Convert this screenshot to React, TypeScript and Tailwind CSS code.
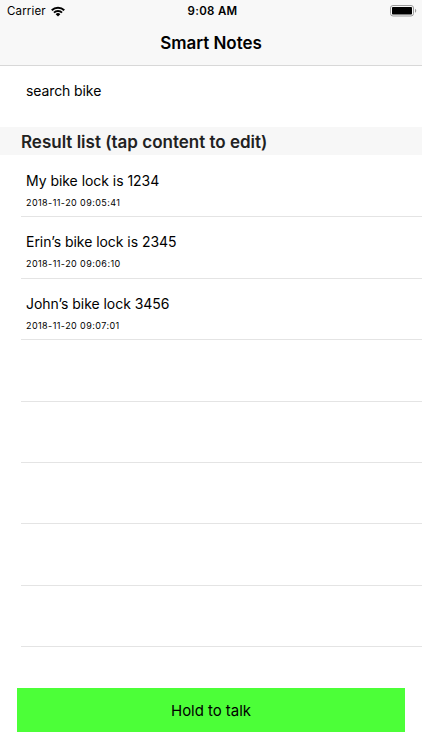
const notes = [
	{ id: 1, content: "My bike lock is 1234", date: "2018-11-20 09:05:41" },
	{ id: 2, content: "Erin’s bike lock is 2345", date: "2018-11-20 09:06:10" },
	{ id: 3, content: "John’s bike lock 3456", date: "2018-11-20 09:07:01" },
];

const EMPTY_ROWS = 5;

const StatusBar = () => {
	return (
		<div className="grid grid-cols-3 items-center h-[22px] pl-[7px] pr-[5px] text-[11.5px]">
			<div className="flex items-center gap-[5px]">
				<span className="pt-px tracking-[0.15px]">Carrier</span>
				<svg width="14" height="11" viewBox="0 0 15 11" fill="none" stroke="black" strokeWidth="2.1">
					<path d="M0.8 4.2a9.5 9.5 0 0 1 13.4 0" />
					<path d="M3.2 6.7a6.1 6.1 0 0 1 8.6 0" />
					<path d="M7.5 10.9L5 8.4a3.6 3.6 0 0 1 5 0z" fill="black" stroke="none" />
				</svg>
			</div>
			<span className="pt-px pl-px text-center font-semibold tracking-[0.3px] whitespace-nowrap">9:08 AM</span>
			<svg className="justify-self-end" width="27" height="12" viewBox="0 0 27 12">
				<rect x="0.5" y="0.5" width="23" height="10.5" rx="2.5" fill="none" stroke="#9b9b9b" />
				<rect x="2" y="2" width="20" height="7.5" rx="0.8" fill="black" />
				<path d="M25 3.8v4a2.2 2.2 0 0 0 0-4z" fill="#9b9b9b" />
			</svg>
		</div>
	);
};

const App = () => {
	return (
		<div className="flex flex-col h-[750px] w-[422px] bg-white text-black overflow-hidden font-['Inter',sans-serif]">
			<header className="h-[66px] shrink-0 bg-[#f8f8f8] border-b border-[#d8d8d8]">
				<StatusBar />
				<h1 className="text-center text-[17px] leading-[43px] font-semibold tracking-[-0.03px]">Smart Notes</h1>
			</header>
			<div className="h-[61px] shrink-0 pl-[26px] text-[14px] leading-[49px] tracking-[-0.1px]">search bike</div>
			<h2 className="h-[28px] shrink-0 pl-[21px] bg-[#f7f7f7] text-[17px] leading-[30px] font-semibold text-[#222]">
				Result list (tap content to edit)
			</h2>
			<ul className="flex-1 pt-px">
				{notes.map((note) => (
					<li key={note.id} className="h-[61.4px] ml-[21px] pl-[5px] pt-[15px] border-b border-[#e4e4e4]">
						<p className="text-[14px] leading-[20px] tracking-[-0.04px]">{note.content}</p>
						<p className="mt-[5px] text-[9px] leading-[14px] tracking-[0.43px]">{note.date}</p>
					</li>
				))}
				{Array.from({ length: EMPTY_ROWS }, (_, i) => (
					<li key={i} className="h-[61.4px] ml-[21px] border-b border-[#e4e4e4]" />
				))}
			</ul>
			<button className="h-[44px] shrink-0 mx-[17px] mb-[18px] pt-[2px] bg-[#4cff38] text-[15px] tracking-[-0.05px]">
				Hold to talk
			</button>
		</div>
	);
};

export default App;
